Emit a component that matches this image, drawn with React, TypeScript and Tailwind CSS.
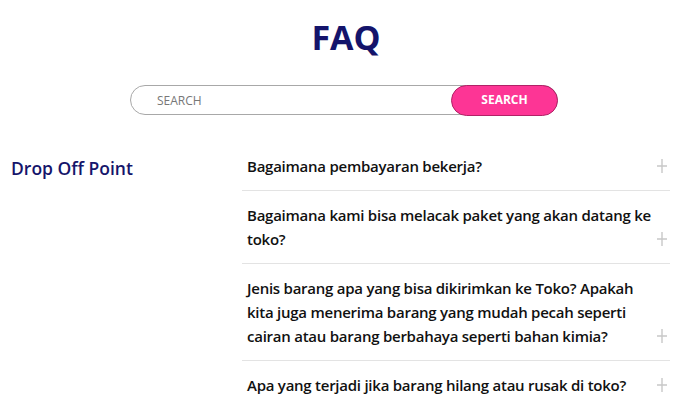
import React from "react";

const faqs = [
  "Bagaimana pembayaran bekerja?",
  "Bagaimana kami bisa melacak paket yang akan datang ke toko?",
  "Jenis barang apa yang bisa dikirimkan ke Toko? Apakah kita juga menerima barang yang mudah pecah seperti cairan atau barang berbahaya seperti bahan kimia?",
  "Apa yang terjadi jika barang hilang atau rusak di toko?",
];

function PlusIcon() {
  return (
    <svg width="10" height="14" viewBox="0 0 10 14" className="shrink-0 mb-[5px]">
      <path d="M5 0v14M0 7h10" stroke="#c8c8c8" strokeWidth="1.4" />
    </svg>
  );
}

export default function App() {
  return (
    <div className="w-[700px] h-[402px] overflow-hidden bg-white font-['Open_Sans',sans-serif]">
      {/* Header */}
      <h1 className="text-center text-[34px] leading-none font-bold text-[#14146b] pt-[20px] pr-[8px]">FAQ</h1>

      {/* Search */}
      <div className="flex justify-center mt-[31px] pr-[12px]">
        <div className="flex items-center w-[428px] h-[30px] rounded-full border border-[#a8a8a8] bg-white">
          <input
            className="flex-1 min-w-0 h-full bg-transparent pl-[26px] text-[12px] text-[#666] placeholder:text-[#777] outline-none"
            placeholder="SEARCH"
          />
          <button className="w-[107px] h-[31px] -mr-px rounded-full bg-[#fd3595] border border-[#b02266] text-white text-[12px] font-bold">
            SEARCH
          </button>
        </div>
      </div>

      {/* Content */}
      <div className="flex mt-[27px]">
        <div className="w-[242px] pl-[11px] pt-[13px]">
          <h2 className="text-[17.5px] font-semibold text-[#15156b]">Drop Off Point</h2>
        </div>
        <div className="w-[428px]">
          {faqs.map((q, i) => (
            <div
              key={i}
              className={`flex items-end justify-between pl-[5px] pr-[3px] py-3 ${
                i < faqs.length - 1 ? "border-b border-[#e3e3e3]" : ""
              }`}
            >
              <p className="flex-1 text-[15px] leading-6 font-semibold tracking-[-0.25px] text-[#111]">{q}</p>
              <PlusIcon />
            </div>
          ))}
        </div>
      </div>
    </div>
  );
}
